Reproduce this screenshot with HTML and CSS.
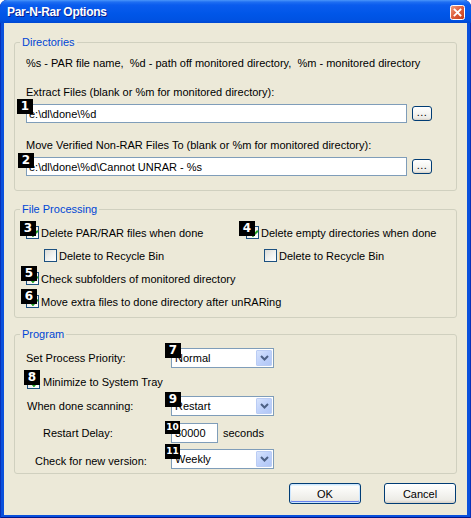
FILE: index.html
```html
<!DOCTYPE html>
<html>
<head>
<meta charset="utf-8">
<title>Par-N-Rar Options</title>
<link rel="stylesheet" href="styles.css">
</head>
<body>
<div class="window">
  <div class="titlebar">
    <span class="title">Par-N-Rar Options</span>
    <span class="close">
      <svg width="15" height="15" viewBox="0 0 15 15">
        <defs>
          <linearGradient id="cg" x1="0" y1="0" x2="1" y2="1">
            <stop offset="0" stop-color="#F0A283"/>
            <stop offset="0.45" stop-color="#E06240"/>
            <stop offset="1" stop-color="#C23A16"/>
          </linearGradient>
        </defs>
        <rect x="0.5" y="0.5" width="14" height="14" rx="2" fill="url(#cg)" stroke="#FFFFFF"/>
        <path d="M4.5 4.5 L10.5 10.5 M10.5 4.5 L4.5 10.5" stroke="#FFFFFF" stroke-width="1.8" stroke-linecap="square"/>
      </svg>
    </span>
  </div>
  <div class="client">
    <fieldset class="group g-dirs">
      <legend>Directories</legend>
      <div class="help">%s - PAR file name,&nbsp; %d - path off monitored directory,&nbsp; %m - monitored directory</div>
      <div class="lbl lbl-first">Extract Files (blank or %m for monitored directory):</div>
      <div class="pathrow">
        <div class="field field-path"><span class="badge b1">1</span><span class="val">e:\dl\done\%d</span></div>
        <button class="btn browse">...</button>
      </div>
      <div class="lbl">Move Verified Non-RAR Files To (blank or %m for monitored directory):</div>
      <div class="pathrow">
        <div class="field field-path"><span class="badge b2">2</span><span class="val">e:\dl\done\%d\Cannot UNRAR - %s</span></div>
        <button class="btn browse">...</button>
      </div>
    </fieldset>

    <fieldset class="group g-fp">
      <legend>File Processing</legend>
      <div class="fp-grid">
        <div class="chkrow"><span class="chk checked"><span class="badge b3">3</span></span><span class="ctext">Delete PAR/RAR files when done</span></div>
        <div class="chkrow"><span class="chk checked"><span class="badge b4">4</span></span><span class="ctext">Delete empty directories when done</span></div>
        <div class="chkrow sub"><span class="chk"></span><span class="ctext">Delete to Recycle Bin</span></div>
        <div class="chkrow sub"><span class="chk"></span><span class="ctext">Delete to Recycle Bin</span></div>
        <div class="chkrow full"><span class="chk checked"><span class="badge b5">5</span></span><span class="ctext">Check subfolders of monitored directory</span></div>
        <div class="chkrow full"><span class="chk checked"><span class="badge b6">6</span></span><span class="ctext">Move extra files to done directory after unRARing</span></div>
      </div>
    </fieldset>

    <fieldset class="group g-prog">
      <legend>Program</legend>
      <div class="prow r1">
        <span class="plabel">Set Process Priority:</span>
        <div class="select"><span class="badge b7">7</span><span class="val">Normal</span><span class="drop"><svg width="9" height="6" viewBox="0 0 9 6"><path d="M1 1 L4.5 4.5 L8 1" fill="none" stroke="#4D6185" stroke-width="2"/></svg></span></div>
      </div>
      <div class="prow r2">
        <div class="chkrow tray"><span class="chk checked"><span class="badge b8">8</span></span><span class="ctext">Minimize to System Tray</span></div>
      </div>
      <div class="prow r3">
        <span class="plabel pl-scan">When done scanning:</span>
        <div class="select"><span class="badge b9">9</span><span class="val">Restart</span><span class="drop"><svg width="9" height="6" viewBox="0 0 9 6"><path d="M1 1 L4.5 4.5 L8 1" fill="none" stroke="#4D6185" stroke-width="2"/></svg></span></div>
      </div>
      <div class="prow r4">
        <span class="plabel pl-delay">Restart Delay:</span>
        <div class="field field-num"><span class="badge b10">10</span><span class="val">30000</span></div>
        <span class="unit">seconds</span>
      </div>
      <div class="prow r5">
        <span class="plabel pl-ver">Check for new version:</span>
        <div class="select"><span class="badge b11">11</span><span class="val">Weekly</span><span class="drop"><svg width="9" height="6" viewBox="0 0 9 6"><path d="M1 1 L4.5 4.5 L8 1" fill="none" stroke="#4D6185" stroke-width="2"/></svg></span></div>
      </div>
    </fieldset>

    <div class="actions">
      <button class="btn dlg default">OK</button>
      <button class="btn dlg">Cancel</button>
    </div>
  </div>
</div>
</body>
</html>
```

FILE: styles.css
```css
* { box-sizing: border-box; }
html, body { margin: 0; padding: 0; background: #ffffff; }
body {
  font-family: "Liberation Sans", Arial, sans-serif;
  font-size: 11px;
  color: #000;
}

.window {
  width: 471px;
  height: 518px;
  display: flex;
  flex-direction: column;
  background: #0A50DC;
  border-radius: 7px 7px 0 0;
  box-shadow: inset 1px 0 0 #0831B8, inset -1px 0 0 #0831B8, inset 0 -1px 0 #00148C;
  overflow: hidden;
}

.titlebar {
  height: 23px;
  flex: none;
  display: flex;
  align-items: center;
  justify-content: space-between;
  padding: 0 6px 0 7px;
  background: linear-gradient(to bottom, #4A96FA 0px, #1F6FF2 2px, #0A5CEE 5px, #0056E8 14px, #0052E2 20px, #0048D2 23px);
  border-radius: 7px 7px 0 0;
}
.title {
  color: #fff;
  font-weight: bold;
  font-size: 12px;
  letter-spacing: -0.3px;
  text-shadow: 1px 1px 0 #0A1E8C;
  margin-top: 1px;
}
.close { width: 15px; height: 15px; display: block; margin-top: 1px; }
.close svg { display: block; }

.client {
  flex: 1;
  margin: 0 4px 3px;
  background: #ECE9D8;
  padding: 13px 10px 0;
  display: flex;
  flex-direction: column;
}

.group {
  margin: 0;
  border: 1px solid #D0D0BF;
  border-radius: 3px;
  padding: 0 11px;
  min-width: 0;
}
.group legend {
  margin-left: -6px;
  padding: 0 2px;
  color: #0046D5;
  font-size: 11px;
  line-height: 13px;
  height: 13px;
}

.g-dirs { padding-top: 8px; padding-bottom: 14px; }
.help, .lbl { line-height: 13px; height: 13px; white-space: nowrap; }
.lbl { margin-top: 16px; }
.pathrow { display: flex; align-items: center; margin-top: 5px; }
.pathrow + .lbl { margin-top: 16px; }

.field {
  position: relative;
  height: 19px;
  border: 1px solid #7F9DB9;
  background: #fff;
  display: flex;
  align-items: center;
  padding-left: 2px;
  white-space: nowrap;
}
.field-path { width: 381px; }
.field-num { width: 47px; height: 20px; padding-left: 3px; }

.btn {
  font-family: "Liberation Sans", Arial, sans-serif;
  font-size: 11px;
  color: #000;
  border: 1px solid #003C74;
  border-radius: 3px;
  background: linear-gradient(to bottom, #FFFFFF 0%, #F7F7F4 40%, #ECEBE6 85%, #D6D0C5 100%);
  padding: 0;
  margin: 0;
}
.browse {
  width: 20px;
  height: 15px;
  margin-left: 5px;
  line-height: 11px;
  display: flex;
  align-items: flex-end;
  justify-content: center;
  padding-bottom: 2px;
  letter-spacing: 0.5px;
}

.badge {
  position: absolute;
  z-index: 2;
  width: 16px;
  height: 15px;
  background: #000;
  color: #fff;
  font-family: "DejaVu Sans", sans-serif;
  font-weight: bold;
  font-size: 12px;
  line-height: 15px;
  text-align: center;
}
.b1 { left: -10px; top: -6px; }
.b2 { left: -9px; top: -5px; }
.b3 { left: -7px; top: -6px; }
.b4 { left: -8px; top: -6px; }
.b5 { left: -6px; top: -7px; }
.b6 { left: -6px; top: -7px; }
.b7 { left: -7px; top: -6px; }
.b8 { left: -4px; top: -7px; }
.b9 { left: -7px; top: -5px; }
.b10 { left: -7px; top: -3px; width: 15px; height: 13px; line-height: 13px; font-size: 9px; }
.b11 { left: -7px; top: -6px; width: 15px; height: 15px; font-size: 9px; }

/* file processing */
.g-fp { margin-top: 12px; padding-top: 5px; padding-bottom: 4px; }
.fp-grid { display: grid; grid-template-columns: 220px 1fr; }
.chkrow { display: flex; align-items: center; height: 23px; white-space: nowrap; }
.chkrow.full { grid-column: 1 / span 2; }
.chkrow.sub { padding-left: 18px; }
.chk {
  position: relative;
  flex: none;
  width: 13px;
  height: 13px;
  border: 1px solid #1C5180;
  background: linear-gradient(135deg, #DCDCD7 0%, #F2F2EF 55%, #FFFFFF 100%);
}
.chk.checked::after {
  content: "";
  position: absolute;
  left: 2px;
  top: 2px;
  width: 6px;
  height: 3px;
  border-left: 2px solid #21A121;
  border-bottom: 2px solid #21A121;
  transform: translate(1px, 1px) rotate(-45deg);
}
.ctext { margin-left: 2px; }

/* program */
.g-prog { margin-top: 10px; padding-top: 7px; padding-bottom: 4px; }
.prow { display: flex; align-items: center; height: 20px; white-space: nowrap; }
.r2, .r3 { margin-top: 4px; }
.r4 { margin-top: 7px; }
.r5 { margin-top: 6px; }
.plabel { width: 145px; flex: none; }
.pl-scan { padding-left: 1px; }
.pl-delay { padding-left: 17px; }
.pl-ver { padding-left: 9px; margin-top: 3px; }
.tray { padding-left: 1px; height: 20px; }
.tray .ctext { margin-left: 3px; }
.unit { margin-left: 5px; }

.select {
  position: relative;
  width: 103px;
  height: 20px;
  border: 1px solid #7F9DB9;
  background: #fff;
  display: flex;
  align-items: center;
  padding-left: 3px;
}
.select .val { flex: 1; }
.drop {
  width: 16px;
  height: 16px;
  margin-right: 1px;
  border: 1px solid #BACCF4;
  border-radius: 1px;
  background: linear-gradient(135deg, #D8E4FC 0%, #C1D3FB 45%, #B0C6F6 100%);
  display: flex;
  align-items: center;
  justify-content: center;
}
.drop svg { display: block; }

.actions {
  display: flex;
  justify-content: flex-end;
  gap: 23px;
  margin-top: 9px;
  padding-right: 1px;
}
.dlg { width: 72px; height: 21px; }
.dlg.default {
  box-shadow: inset 0 0 0 1px #CEE7FF, inset 0 -1px 0 1px #6982EE, inset 0 1px 0 1px #E5F4FD;
}
```
